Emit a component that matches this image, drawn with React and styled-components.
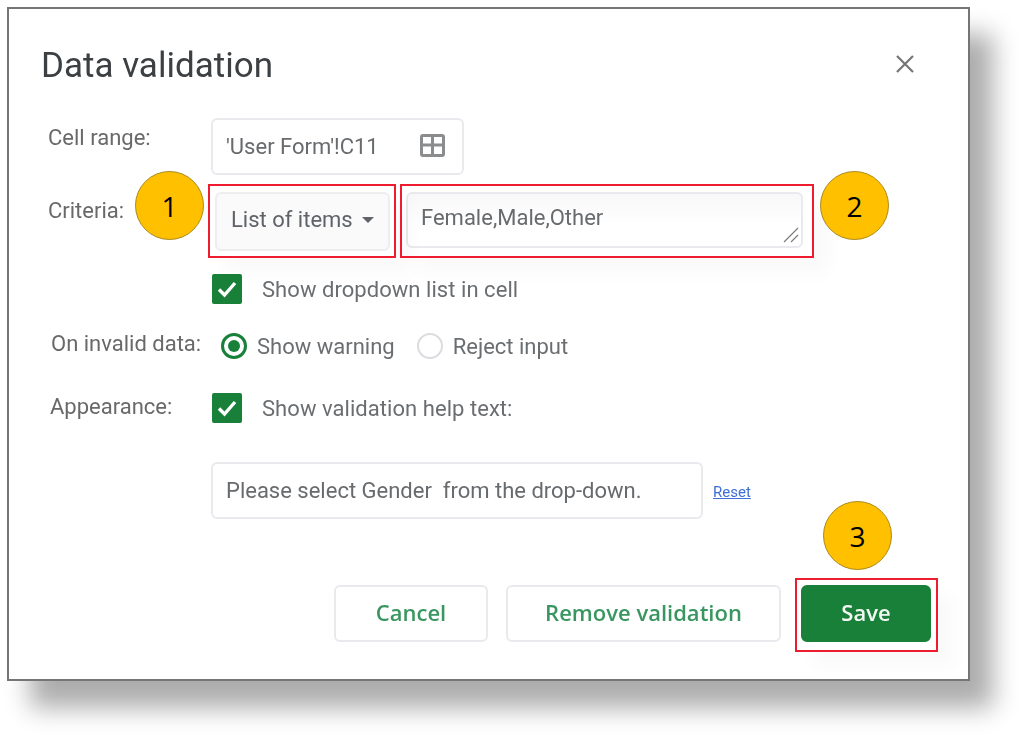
import React from "react";
import styled, { createGlobalStyle } from "styled-components";

const Global = createGlobalStyle`
  html, body { margin: 0; padding: 0; background: #fff; }
  body { font-family: Roboto, "Liberation Sans", sans-serif; }
`;

const Page = styled.div`
  position: relative;
  width: 1024px;
  height: 735px;
  padding: 7px 0 0 7px;
  box-sizing: border-box;
  overflow: hidden;
  background: #fff;
`;

const Dialog = styled.div`
  width: 963px;
  height: 674px;
  box-sizing: border-box;
  background: #fff;
  border: 2px solid #757575;
  box-shadow: 23px 27px 24px #adadad;
`;

const Body = styled.div`
  padding: 30px 0 0 32px;
  filter: blur(0.55px);
`;

const Header = styled.div`
  display: flex;
  align-items: center;
  justify-content: space-between;
  height: 50px;
  padding-right: 53px;
  margin-bottom: 29px;
`;

const Title = styled.h1`
  margin: 2px 0 0;
  font-family: Roboto, sans-serif;
  font-size: 35px;
  font-weight: 400;
  color: #3c4043;
`;

const Row = styled.div`
  display: flex;
  align-items: flex-start;
  margin-top: ${(p) => p.$top || 0}px;
`;

const Label = styled.div`
  width: ${(p) => 170 - (p.$left || 0)}px;
  padding-left: ${(p) => p.$left || 0}px;
  padding-top: ${(p) => p.$pad || 0}px;
  font-size: 22px;
  line-height: 26px;
  color: #696969;
  white-space: nowrap;
`;

const Field = styled.div`
  display: flex;
  align-items: center;
  justify-content: space-between;
  box-sizing: border-box;
  width: ${(p) => p.$w}px;
  height: 57px;
  padding: 0 17px 0 13px;
  background: #fff;
  border: 2px solid #e8eaed;
  border-radius: 6px;
  font-size: 22px;
  color: #686b6e;
  white-space: pre;
`;

const Select = styled(Field)`
  width: 175px;
  height: 59px;
  margin-left: 4px;
  padding: 0 14px 4px;
  background: #fafafa;
  border-color: #eceeef;
  color: #5f6368;
`;

const TextArea = styled(Field)`
  position: relative;
  width: 397px;
  height: 56px;
  margin-left: 16px;
  padding: 0 13px 6px;
  justify-content: flex-start;
  background: linear-gradient(#f8f8f8, #fff 60%);
`;

const Grip = styled.svg`
  position: absolute;
  right: 1px;
  bottom: 2px;
`;

const GridGlyph = styled.svg`
  margin-bottom: 2px;
`;

const CheckBox = styled.span`
  display: flex;
  align-items: center;
  justify-content: center;
  flex: none;
  width: 30px;
  height: 30px;
  margin-left: 1px;
  border-radius: 2px;
  background: #188038;
`;

const Option = styled.div`
  display: flex;
  align-items: center;
  height: 30px;
  font-size: 22px;
  color: #6b6e71;
  white-space: nowrap;
`;

const CheckText = styled.span`
  margin-left: 20px;
  letter-spacing: 0.05px;
`;

const Radio = styled.span`
  display: flex;
  align-items: center;
  justify-content: center;
  box-sizing: border-box;
  flex: none;
  width: 26px;
  height: 26px;
  margin-left: ${(p) => p.$left || 0}px;
  margin-right: 10px;
  border-radius: 50%;
  border: ${(p) => (p.$on ? "3px solid #188038" : "2px solid #dadce0")};
  &::after {
    content: "";
    display: ${(p) => (p.$on ? "block" : "none")};
    width: 12px;
    height: 12px;
    border-radius: 50%;
    background: #188038;
  }
`;

const ResetLink = styled.a`
  margin: 21px 0 0 10px;
  font-size: 15px;
  line-height: 18px;
  color: #3f6fd8;
  text-decoration: underline;
`;

const Footer = styled.div`
  display: flex;
  margin: 66px 0 0 293px;
`;

const Button = styled.button`
  box-sizing: border-box;
  width: ${(p) => p.$w}px;
  height: 57px;
  margin-left: ${(p) => p.$left || 0}px;
  padding: 0 0 4px;
  border-radius: 6px;
  border: 2px solid ${(p) => (p.$primary ? "#188038" : "#e8eaed")};
  background: ${(p) => (p.$primary ? "#188038" : "#fff")};
  color: ${(p) => (p.$primary ? "#f4f7f4" : "#3a9660")};
  font-family: "Open Sans", Roboto, sans-serif;
  font-size: 22px;
  font-weight: 600;
`;

const RedBox = styled.div`
  position: absolute;
  left: ${(p) => p.$x}px;
  top: ${(p) => p.$y}px;
  width: ${(p) => p.$w}px;
  height: ${(p) => p.$h}px;
  box-sizing: border-box;
  border: 2px solid #ee1c2e;
  box-shadow: 16px 16px 18px rgba(0, 0, 0, 0.025);
`;

const Badge = styled.div`
  position: absolute;
  left: ${(p) => p.$x}px;
  top: ${(p) => p.$y}px;
  display: flex;
  align-items: center;
  justify-content: center;
  box-sizing: border-box;
  width: 69px;
  height: 69px;
  border-radius: 50%;
  background: #ffc000;
  border: 1px solid #a88a1c;
  font-family: "Open Sans", sans-serif;
  font-size: 28px;
  color: #000;
`;

const Close = () => (
  <svg width="20" height="20" viewBox="0 0 20 20" fill="none" stroke="#757575" strokeWidth="2.2">
    <path d="M2 2 18 18M18 2 2 18" />
  </svg>
);

const GridIcon = () => (
  <GridGlyph width="25" height="23" viewBox="0 0 25 23" fill="none" stroke="#8a8c8e" strokeWidth="3">
    <rect x="1.5" y="1.5" width="22" height="20" rx="1.5" />
    <path d="M12.5 1.5V21.5M1.5 11H23.5" />
  </GridGlyph>
);

const Tick = () => (
  <svg width="22" height="20" viewBox="0 0 22 20" fill="none" stroke="#fff" strokeWidth="3.4">
    <path d="M3 10.5 8.5 16 19 4" />
  </svg>
);

const Caret = () => (
  <svg width="12" height="6" viewBox="0 0 12 6" fill="#5f6368">
    <path d="M0 0H12L6 6Z" />
  </svg>
);

export default function App() {
  return (
    <Page>
      <Global />
      <Dialog>
        <Body>
          <Header>
            <Title>Data validation</Title>
            <Close />
          </Header>

          <Row>
            <Label $left={7} $pad={7}>Cell range:</Label>
            <Field $w={253}>
              'User Form'!C11
              <GridIcon />
            </Field>
          </Row>

          <Row $top={17}>
            <Label $left={7} $pad={6}>Criteria:</Label>
            <Select>
              List of items
              <Caret />
            </Select>
            <TextArea>
              Female,Male,Other
              <Grip width="18" height="18" viewBox="0 0 18 18" fill="none" stroke="#7c7c7c" strokeWidth="1.2">
                <path d="M2 16 16 2M9 16 16 9" />
              </Grip>
            </TextArea>
          </Row>

          <Row $top={23}>
            <Label />
            <Option>
              <CheckBox><Tick /></CheckBox>
              <CheckText>Show dropdown list in cell</CheckText>
            </Option>
          </Row>

          <Row $top={27}>
            <Label $left={10}>On invalid data:</Label>
            <Option>
              <Radio $on $left={10} />
              Show warning
              <Radio $left={22} />
              Reject input
            </Option>
          </Row>

          <Row $top={32}>
            <Label $left={9} $pad={1}>Appearance:</Label>
            <Option>
              <CheckBox><Tick /></CheckBox>
              <CheckText>Show validation help text:</CheckText>
            </Option>
          </Row>

          <Row $top={39}>
            <Label />
            <Field $w={492}>Please select Gender  from the drop-down.</Field>
            <ResetLink>Reset</ResetLink>
          </Row>

          <Footer>
            <Button $w={154}>Cancel</Button>
            <Button $w={275} $left={18}>Remove validation</Button>
            <Button $w={130} $left={20} $primary>Save</Button>
          </Footer>
        </Body>
      </Dialog>

      <RedBox $x={208} $y={184} $w={188} $h={74} />
      <RedBox $x={400} $y={184} $w={414} $h={74} />
      <RedBox $x={795} $y={578} $w={143} $h={74} />
      <Badge $x={135} $y={171}>1</Badge>
      <Badge $x={820} $y={171}>2</Badge>
      <Badge $x={823} $y={501}>3</Badge>
    </Page>
  );
}
